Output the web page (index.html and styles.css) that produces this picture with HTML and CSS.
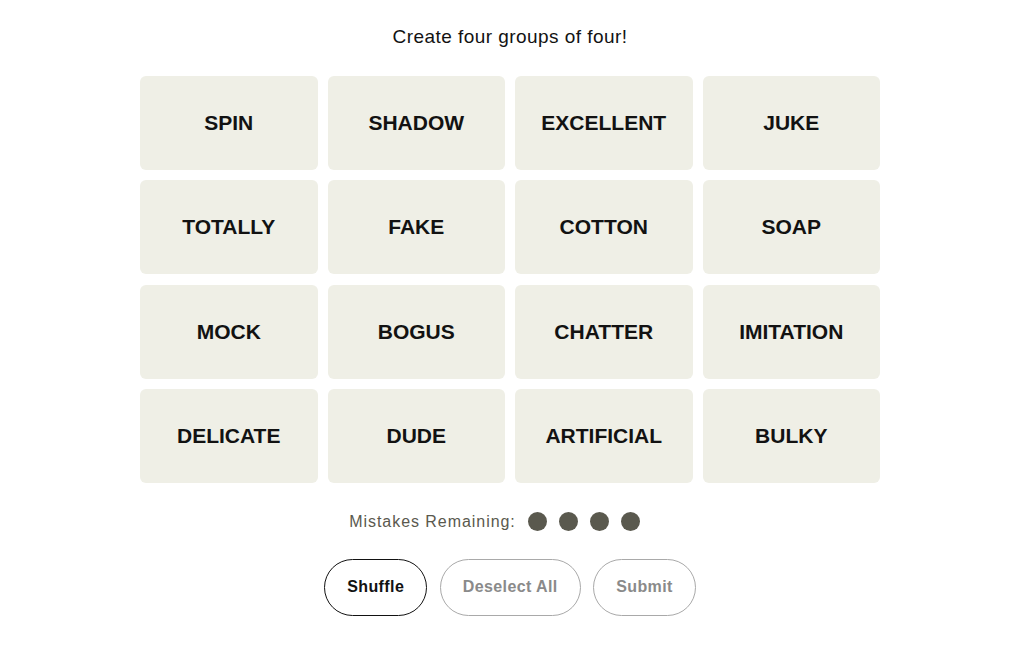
FILE: index.html
```html
<!DOCTYPE html>
<html lang="en">
<head>
<meta charset="utf-8">
<title>Connections</title>
<link rel="stylesheet" href="styles.css">
</head>
<body>
<main class="game">
  <h2 class="prompt">Create four groups of four!</h2>
  <div class="board">
    <button class="tile">SPIN</button>
    <button class="tile">SHADOW</button>
    <button class="tile">EXCELLENT</button>
    <button class="tile">JUKE</button>
    <button class="tile">TOTALLY</button>
    <button class="tile">FAKE</button>
    <button class="tile">COTTON</button>
    <button class="tile">SOAP</button>
    <button class="tile">MOCK</button>
    <button class="tile">BOGUS</button>
    <button class="tile">CHATTER</button>
    <button class="tile">IMITATION</button>
    <button class="tile">DELICATE</button>
    <button class="tile">DUDE</button>
    <button class="tile">ARTIFICIAL</button>
    <button class="tile">BULKY</button>
  </div>
  <div class="mistakes">
    <span class="mistakes-label">Mistakes Remaining:</span>
    <span class="dots">
      <span class="dot"></span><span class="dot"></span><span class="dot"></span><span class="dot"></span>
    </span>
  </div>
  <div class="controls">
    <button class="pill">Shuffle</button>
    <button class="pill pill-disabled">Deselect All</button>
    <button class="pill pill-disabled">Submit</button>
  </div>
</main>
</body>
</html>
```

FILE: styles.css
```css
html, body {
  margin: 0;
  padding: 0;
  background: #ffffff;
}

body {
  font-family: "Liberation Sans", Arial, sans-serif;
  color: #121212;
}

.game {
  display: flex;
  flex-direction: column;
  align-items: center;
  padding: 25px 4px 0 0;
}

.prompt {
  margin: 0;
  font-family: "Liberation Sans", Arial, sans-serif;
  font-size: 19px;
  font-weight: 400;
  letter-spacing: 0.45px;
  line-height: 24px;
  height: 24px;
  color: #121212;
}

.board {
  margin-top: 27px;
  display: grid;
  grid-template-columns: repeat(4, 177.5px);
  grid-template-rows: repeat(4, 94px);
  column-gap: 10px;
  row-gap: 10.33px;
}

.tile {
  border: none;
  border-radius: 6px;
  background: #efefe6;
  color: #121212;
  font-family: "Liberation Sans", Arial, sans-serif;
  font-weight: 700;
  font-size: 21px;
  padding: 0;
  display: flex;
  align-items: center;
  justify-content: center;
}

.mistakes {
  margin-top: 29px;
  display: flex;
  align-items: center;
  gap: 12px;
  height: 20px;
  padding-right: 31px;
}

.mistakes-label {
  font-size: 16px;
  letter-spacing: 0.95px;
  color: #5a594e;
  line-height: 20px;
}

.dots {
  display: flex;
  gap: 12px;
}

.dot {
  width: 19px;
  height: 19px;
  border-radius: 50%;
  background: #5a594e;
}

.controls {
  margin-top: 27px;
  display: flex;
  gap: 12.5px;
}

.pill {
  height: 57px;
  padding: 0 22px;
  border-radius: 29px;
  border: 1px solid #121212;
  background: #ffffff;
  color: #121212;
  font-family: "Liberation Sans", Arial, sans-serif;
  font-size: 16px;
  font-weight: 700;
  letter-spacing: 0.4px;
}

.pill-disabled {
  color: #8a8a8a;
  border-color: #a9a9a9;
}
```
